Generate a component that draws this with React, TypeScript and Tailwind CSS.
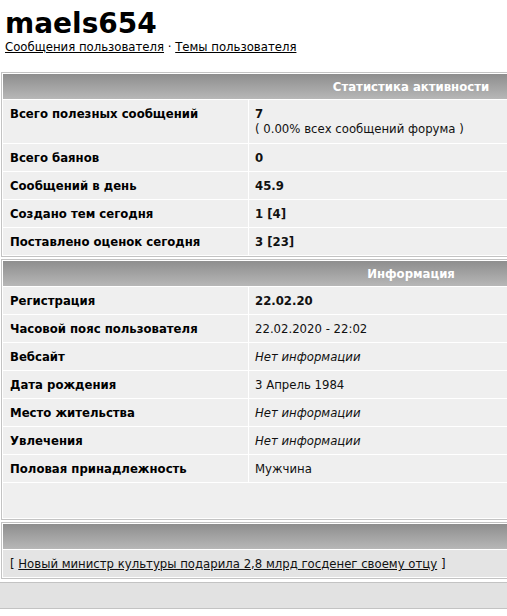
import React from "react";

type Row = { label: string; value: React.ReactNode; tall?: boolean };

const statRows: Row[] = [
  {
    label: "Всего полезных сообщений",
    value: (
      <>
        <div className="font-bold">7</div>
        <div>( 0.00% всех сообщений форума )</div>
      </>
    ),
    tall: true,
  },
  { label: "Всего баянов", value: <span className="font-bold">0</span> },
  { label: "Сообщений в день", value: <span className="font-bold">45.9</span> },
  { label: "Создано тем сегодня", value: <span className="font-bold">1 [4]</span> },
  { label: "Поставлено оценок сегодня", value: <span className="font-bold">3 [23]</span> },
];

const infoRows: Row[] = [
  { label: "Регистрация", value: <span className="font-bold">22.02.20</span> },
  { label: "Часовой пояс пользователя", value: "22.02.2020 - 22:02" },
  { label: "Вебсайт", value: <i>Нет информации</i> },
  { label: "Дата рождения", value: "3 Апрель 1984" },
  { label: "Место жительства", value: <i>Нет информации</i> },
  { label: "Увлечения", value: <i>Нет информации</i> },
  { label: "Половая принадлежность", value: "Мужчина" },
];

function Header({ title }: { title?: string }) {
  return (
    <div className="flex h-[25px] bg-gradient-to-b from-[#8e8e8e] to-[#b7b7b7]">
      <div className="w-[246px] shrink-0" />
      <div className="flex-1 text-center text-[13px] font-bold leading-[25px] text-white">
        {title}
      </div>
    </div>
  );
}

function Rows({ rows }: { rows: Row[] }) {
  return (
    <>
      {rows.map((r) => (
        <div key={r.label} className="flex gap-px">
          <div
            className={`w-[245px] shrink-0 bg-[#efefef] pl-[7px] pt-[6px] font-bold text-black ${
              r.tall ? "pb-[7px]" : "pb-[6px]"
            }`}
          >
            {r.label}
          </div>
          <div
            className={`flex-1 bg-[#efefef] pl-[6px] pt-[6px] text-[#111] ${
              r.tall ? "pb-[7px]" : "pb-[6px]"
            }`}
          >
            {r.value}
          </div>
        </div>
      ))}
    </>
  );
}

export default function App() {
  return (
    <div className="h-[616px] w-[507px] overflow-hidden bg-white font-['DejaVu_Sans_Condensed','DejaVu_Sans',Verdana,sans-serif] text-[13px] leading-[15px] text-black">
      <div className="w-[580px]">
        <div className="pl-[5px] pt-[9px]">
          <h1 className="font-['DejaVu_Sans',Verdana,sans-serif] text-[28px] font-bold leading-[30px]">
            maels654
          </h1>
          <div className="leading-[15px]">
            <a href="#" className="text-black underline">
              Сообщения пользователя
            </a>{" "}
            ·{" "}
            <a href="#" className="text-black underline">
              Темы пользователя
            </a>
          </div>
        </div>

        <div className="ml-px mt-[18px] flex w-[574px] flex-col gap-px border border-[#c3c3c3] bg-white p-px">
          <Header title="Статистика активности" />
          <Rows rows={statRows} />
        </div>

        <div className="ml-px mt-[2px] flex w-[574px] flex-col gap-px border border-[#c3c3c3] bg-white p-px">
          <Header title="Информация" />
          <Rows rows={infoRows} />
          <div className="h-[35px] bg-[#efefef]" />
        </div>

        <div className="ml-px mt-[2px] flex w-[574px] flex-col gap-px border border-[#c3c3c3] bg-white p-px">
          <Header />
          <div className="h-[27px] bg-[#e4e4e4] pl-[7px] pt-[6px] text-[#111]">
            [{" "}
            <a href="#" className="text-[#111] underline">
              Новый министр культуры подарила 2,8 млрд госденег своему отцу
            </a>{" "}
            ]
          </div>
        </div>

        <div className="mt-[3px] h-[27px] border-y border-[#c3c3c3] bg-[#e2e2e2]" />
      </div>
    </div>
  );
}
